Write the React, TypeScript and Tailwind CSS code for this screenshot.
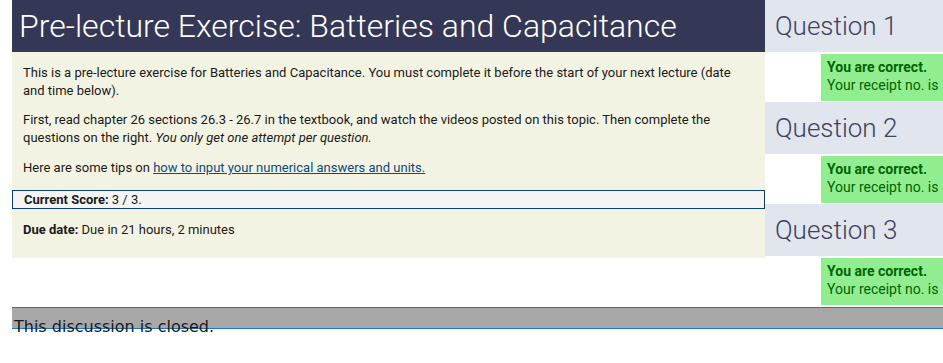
import React from 'react';

interface Question {
  title: string;
}

const questions: Question[] = [
  { title: 'Question 1' },
  { title: 'Question 2' },
  { title: 'Question 3' },
];

const roboto = { fontFamily: 'Roboto, "Liberation Sans", sans-serif' };

const QuestionBlock: React.FC<{ q: Question }> = ({ q }) => (
  <div className="mb-[1px]">
    <div className="h-[52px] bg-[#e1e5ee] pl-[10px] pt-[10px] text-[26px] font-light leading-[32px] text-[#3d4260]">
      {q.title}
    </div>
    <div className="ml-[56px] mt-[2px] h-[47px] w-[160px] bg-[#90ee90] pl-[6px] pt-[4px] text-[14px] leading-[18px] text-[#006400]">
      <div className="font-bold">You are correct.</div>
      <div className="whitespace-nowrap">Your receipt no. is</div>
    </div>
  </div>
);

export default function App() {
  return (
    <div className="w-[943px] h-[363px] overflow-hidden bg-white" style={roboto}>
      <div className="flex pl-[12px]">
        {/* left: exercise description */}
        <div className="w-[753px] shrink-0">
          <div className="h-[52px] bg-[#353756] pl-[7px] text-[32px] font-light leading-[52px] text-white">
            Pre-lecture Exercise: Batteries and Capacitance
          </div>
          <div className="bg-[#f3f3e3] pt-[12px] pb-[19px] text-[13px] leading-[18px] text-[#1a1a1a]">
            <p className="px-[11px]">
              This is a pre-lecture exercise for Batteries and Capacitance. You must complete it before the start of your next lecture (date and time below).
            </p>
            <p className="mt-[11px] px-[11px]">
              First, read chapter 26 sections 26.3 - 26.7 in the textbook, and watch the videos posted on this topic. Then complete the questions on the right. <em>You only get one attempt per question.</em>
            </p>
            <p className="mt-[12px] px-[11px]">
              Here are some tips on{' '}
              <a href="#" className="text-[#0b4a84] underline">
                how to input your numerical answers and units.
              </a>
            </p>
            <div className="mt-[13px] h-[19px] border border-[#0a3d72] bg-[#f4f4f4] px-[11px] leading-[17px]">
              <span className="font-bold">Current Score:</span> 3 / 3.
            </div>
            <p className="mt-[12px] px-[11px]">
              <span className="font-bold">Due date:</span> Due in 21 hours, 2 minutes
            </p>
          </div>
        </div>

        {/* right: questions */}
        <div className="w-[240px] shrink-0">
          {questions.map((q, i) => (
            <QuestionBlock key={i} q={q} />
          ))}
        </div>
      </div>

      <div className="ml-[12px] mt-[1px] h-[22px] border-y border-[#1c75cf] bg-[#a8a8a8]">
        <div
          className="mt-[7px] pl-[2px] text-[16px] text-[#1a1a1a] whitespace-nowrap"
          style={{ fontFamily: '"DejaVu Sans", sans-serif' }}
        >
          This discussion is closed.
        </div>
      </div>
    </div>
  );
}
